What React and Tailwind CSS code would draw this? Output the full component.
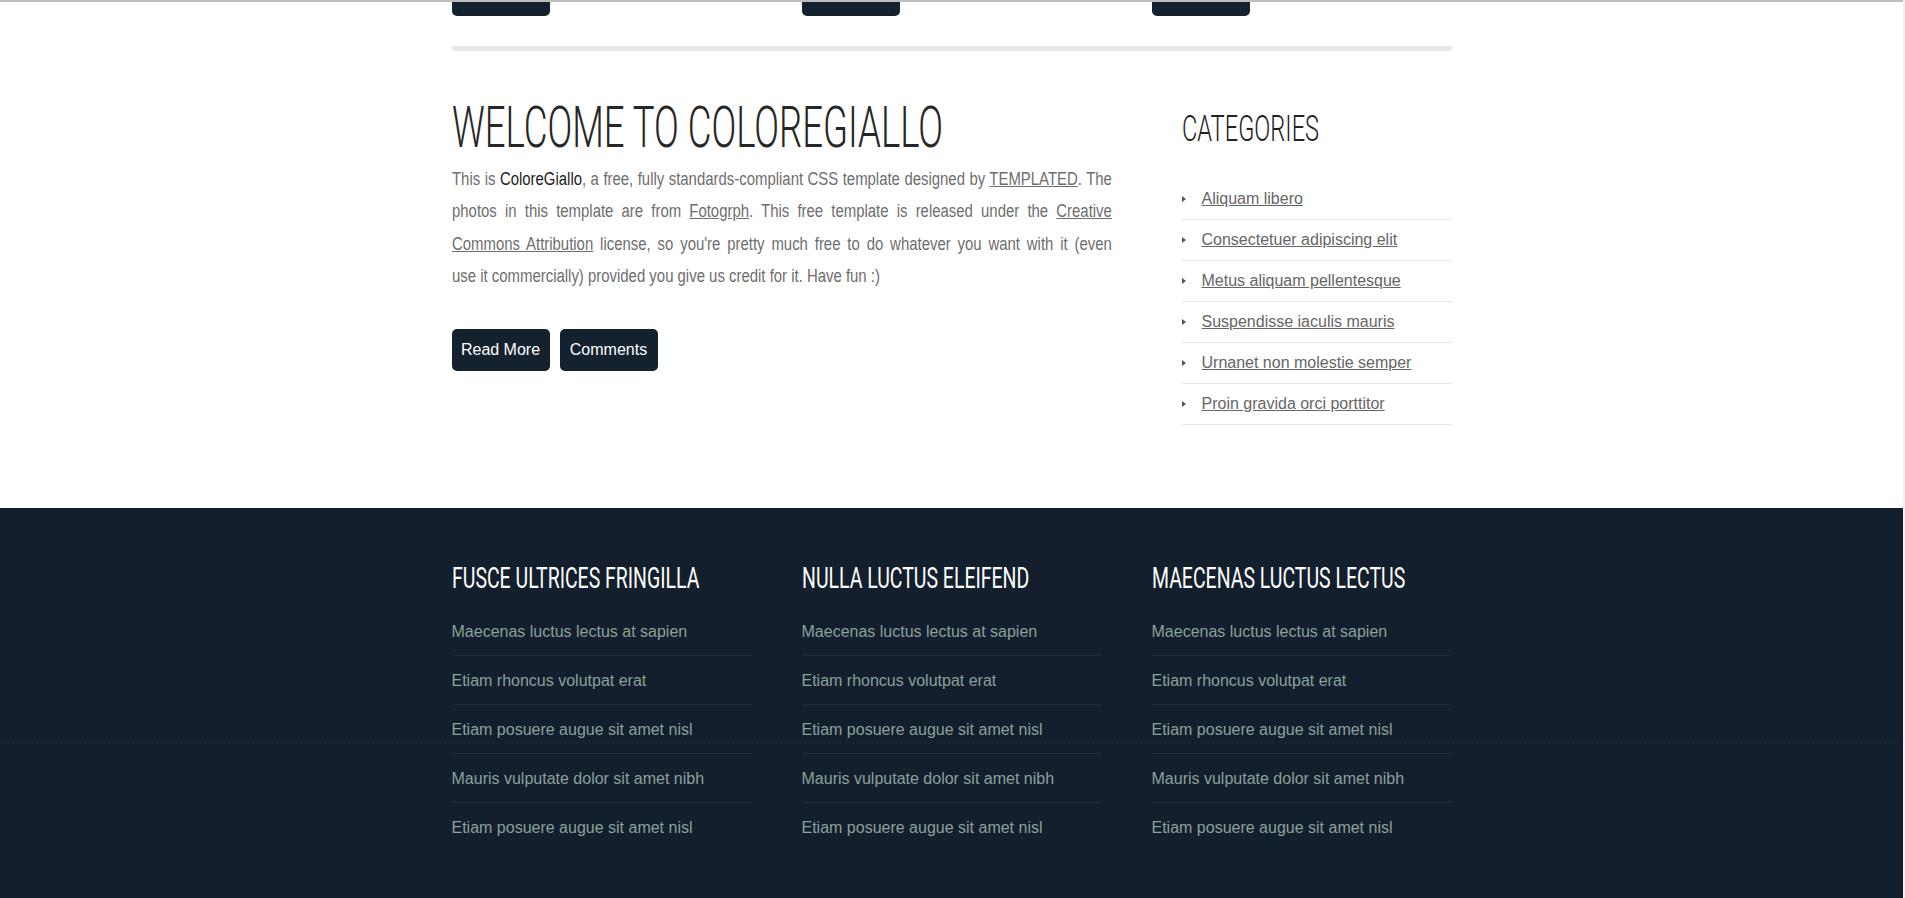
import React from "react";

const body = "[font-family:'Liberation_Sans_Narrow','Liberation_Sans',sans-serif]";
const head = "[font-family:Roboto,sans-serif]";

const categories = [
  "Aliquam libero",
  "Consectetuer adipiscing elit",
  "Metus aliquam pellentesque",
  "Suspendisse iaculis mauris",
  "Urnanet non molestie semper",
  "Proin gravida orci porttitor",
];

const footerCols = [
  "FUSCE ULTRICES FRINGILLA",
  "NULLA LUCTUS ELEIFEND",
  "MAECENAS LUCTUS LECTUS",
];

const footerItems = [
  "Maecenas luctus lectus at sapien",
  "Etiam rhoncus volutpat erat",
  "Etiam posuere augue sit amet nisl",
  "Mauris vulputate dolor sit amet nibh",
  "Etiam posuere augue sit amet nisl",
];

function Button({ children }) {
  return (
    <a className="flex h-[42px] w-[98px] items-center justify-center rounded-[5px] bg-[#142230] text-[16px] text-white">
      {children}
    </a>
  );
}

const jl = "block whitespace-nowrap [text-align-last:justify]";

export default function App() {
  return (
    <div className={`flex h-[898px] w-full overflow-hidden ${body}`}>
      <div className="flex min-w-0 flex-1 flex-col">
        <div className="h-[2px] bg-[#bdbdbd]" />
        <div className="h-[506px] bg-white">
          <div className="mx-auto w-[1000px]">
            <div className="grid grid-cols-3 gap-[50px]">
              <div className="h-[14px] w-[98px] rounded-b-[5px] bg-[#142230]" />
              <div className="h-[14px] w-[98px] rounded-b-[5px] bg-[#142230]" />
              <div className="h-[14px] w-[98px] rounded-b-[5px] bg-[#142230]" />
            </div>
            <div className="mt-[30px] h-[5px] bg-[#e6e7eb]" />
            <div className="mt-[47px] flex">
              <div className="w-[660px]">
                <h1 className={`${head} whitespace-nowrap text-[58px] font-light leading-none text-[#262626]`}>
                  <span className="inline-block origin-left scale-x-[0.63]">WELCOME TO COLOREGIALLO</span>
                </h1>
                <p className="mt-[7px] w-[796px] origin-left scale-x-[0.829] text-justify text-[18px] leading-[32.4px] text-[#6e6e6e]">
                  <span className={jl}>
                    This is <span className="text-[#222]">ColoreGiallo</span>, a free, fully standards-compliant CSS template designed by{" "}
                    <a className="underline">TEMPLATED</a>. The
                  </span>
                  <span className={jl}>
                    photos in this template are from <a className="underline">Fotogrph</a>. This free template is released under the{" "}
                    <a className="underline">Creative</a>
                  </span>
                  <span className={jl}>
                    <a className="underline">Commons Attribution</a> license, so you're pretty much free to do whatever you want with it (even
                  </span>
                  <span className="block whitespace-nowrap">
                    use it commercially) provided you give us credit for it. Have fun :)
                  </span>
                </p>
                <div className="mt-[36px] flex gap-[10px]">
                  <Button>Read More</Button>
                  <Button>Comments</Button>
                </div>
              </div>
              <div className="ml-auto w-[270px]">
                <h2 className={`${head} mt-[12px] whitespace-nowrap text-[37.5px] font-light leading-none text-[#222]`}>
                  <span className="inline-block origin-left scale-x-[0.63]">CATEGORIES</span>
                </h2>
                <ul className="mt-[31px]">
                  {categories.map((c) => (
                    <li key={c} className="flex items-center border-b border-[#e6e6e6] py-[8px] text-[16px] leading-[24px]">
                      <span className="h-0 w-0 border-y-[3px] border-l-[4px] border-y-transparent border-l-[#555]" />
                      <a className="ml-[16px] text-[#666] underline">{c}</a>
                    </li>
                  ))}
                </ul>
              </div>
            </div>
          </div>
        </div>
        <footer className="relative flex-1 bg-[#131f2c]">
          <div className="absolute left-0 right-0 top-[233px] h-[3px] bg-[repeating-linear-gradient(90deg,#17232f_0px,#17232f_3px,transparent_3px,transparent_6px)]" />
          <div className="relative mx-auto grid w-[1000px] grid-cols-3 gap-[50px] pt-[56px]">
            {footerCols.map((t) => (
              <div key={t}>
                <h3 className={`${head} whitespace-nowrap text-[29.5px] font-normal leading-none text-white`}>
                  <span className="inline-block origin-left scale-x-[0.66]">{t}</span>
                </h3>
                <ul className="mt-[13px]">
                  {footerItems.map((it, i) => (
                    <li
                      key={i}
                      className={`pb-[11px] pt-[13px] text-[16px] leading-[24px] text-[#8ca09c] ${i < footerItems.length - 1 ? "border-b border-[#1d2b39]" : ""}`}
                    >
                      {it}
                    </li>
                  ))}
                </ul>
              </div>
            ))}
          </div>
        </footer>
      </div>
      <div className="w-[2px] bg-[#f1f1f1]" />
    </div>
  );
}
